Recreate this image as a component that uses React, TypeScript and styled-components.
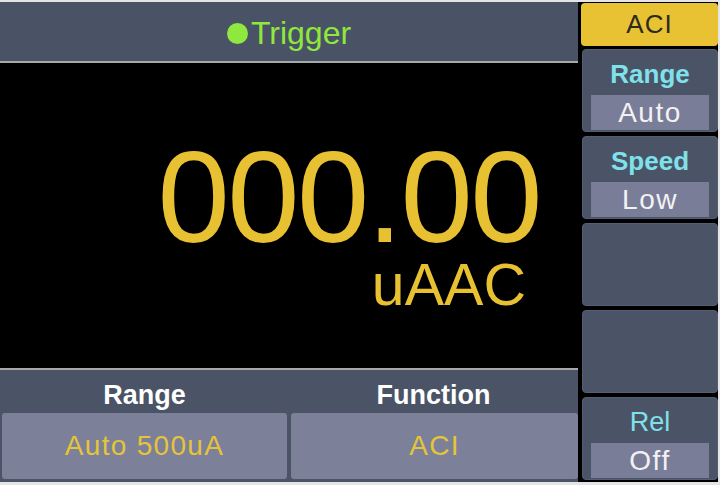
import React from "react";
import styled, { createGlobalStyle } from "styled-components";

const GlobalStyle = createGlobalStyle`
  html, body {
    margin: 0;
    padding: 0;
    background: #e4e5e8;
  }
  body {
    font-family: "Liberation Sans", Arial, sans-serif;
  }
`;

interface SidePanel {
  label?: string;
  value?: string;
  bold?: boolean;
}

const sidePanels: SidePanel[] = [
  { label: "Range", value: "Auto", bold: true },
  { label: "Speed", value: "Low", bold: true },
  {},
  {},
  { label: "Rel", value: "Off", bold: false },
];

const App: React.FC = () => {
  return (
    <>
      <GlobalStyle />
      <Screen>
        <Frame>
          <MainColumn>
            <TopBar>
              <TriggerDot />
              <TriggerText>Trigger</TriggerText>
            </TopBar>
            <Separator />
            <Display>
              <Reading>000.00</Reading>
              <Unit>uAAC</Unit>
            </Display>
            <Separator />
            <BottomSection>
              <LabelRow>
                <BottomLabel>Range</BottomLabel>
                <BottomLabel>Function</BottomLabel>
              </LabelRow>
              <ButtonRow>
                <BottomButton>Auto 500uA</BottomButton>
                <BottomButton>ACI</BottomButton>
              </ButtonRow>
            </BottomSection>
          </MainColumn>
          <SideColumn>
            <ModeButton>ACI</ModeButton>
            {sidePanels.map((p, i) => (
              <Panel key={i}>
                {p.label && <PanelLabel $bold={p.bold}>{p.label}</PanelLabel>}
                {p.value && <PanelValue>{p.value}</PanelValue>}
              </Panel>
            ))}
          </SideColumn>
        </Frame>
      </Screen>
    </>
  );
};

export default App;

const Screen = styled.div`
  width: 720px;
  height: 485px;
  padding-top: 2px;
  box-sizing: border-box;
  overflow: hidden;
`;

const Frame = styled.div`
  width: 718px;
  height: 480px;
  background: #000;
  display: grid;
  grid-template-columns: 578px 1fr;
  column-gap: 3px;
`;

const MainColumn = styled.div`
  display: grid;
  grid-template-rows: 59px 2px 1fr 2px 112px;
`;

const TopBar = styled.div`
  background: #4a5265;
  display: flex;
  align-items: center;
  justify-content: center;
  padding-top: 3px;
  box-sizing: border-box;
`;

const TriggerDot = styled.span`
  width: 21px;
  height: 21px;
  border-radius: 50%;
  background: #8fe83d;
  margin-right: 3px;
`;

const TriggerText = styled.span`
  color: #8fe83d;
  font-size: 32px;
  line-height: 1;
`;

const Separator = styled.div`
  background: #a6a9aa;
`;

const Display = styled.div`
  background: #000;
  display: flex;
  flex-direction: column;
  align-items: flex-end;
  padding: 79px 38px 0 0;
`;

const Reading = styled.div`
  color: #e8c132;
  font-size: 130px;
  line-height: 110px;
  letter-spacing: -2.5px;
`;

const Unit = styled.div`
  color: #e8c132;
  font-size: 59px;
  line-height: 52px;
  margin-top: 7px;
  margin-right: 14px;
`;

const BottomSection = styled.div`
  background: #4a5466;
  display: flex;
  flex-direction: column;
`;

const LabelRow = styled.div`
  display: grid;
  grid-template-columns: 289px 1fr;
  height: 43px;
  box-sizing: border-box;
  padding-top: 12px;
`;

const BottomLabel = styled.div`
  color: #ffffff;
  font-weight: bold;
  font-size: 27px;
  line-height: 26px;
  text-align: center;
`;

const ButtonRow = styled.div`
  display: grid;
  grid-template-columns: 285px 1fr;
  column-gap: 4px;
  padding-left: 2px;
  height: 66px;
`;

const BottomButton = styled.div`
  background: #7c8099;
  border-radius: 3px;
  color: #e4c53a;
  font-size: 28px;
  letter-spacing: 1.3px;
  display: flex;
  align-items: center;
  justify-content: center;
`;

const SideColumn = styled.div`
  display: grid;
  grid-template-rows: 42px repeat(5, 83px);
  row-gap: 4px;
  padding-top: 1px;
`;

const ModeButton = styled.div`
  background: #e9c234;
  border-radius: 4px;
  color: #2b2a22;
  font-size: 26px;
  letter-spacing: 1px;
  display: flex;
  align-items: center;
  justify-content: center;
  margin-bottom: -1px;
`;

const Panel = styled.div`
  background: #4b5467;
  border: 1px solid #555e73;
  border-radius: 4px;
  margin-left: 1px;
  display: flex;
  flex-direction: column;
  align-items: center;
  justify-content: flex-end;
  gap: 8px;
  padding-bottom: 1px;
`;

const PanelLabel = styled.div<{ $bold?: boolean }>`
  color: #7fe1e9;
  font-size: ${(p) => (p.$bold ? "26px" : "27px")};
  font-weight: ${(p) => (p.$bold ? "bold" : "normal")};
  line-height: 26px;
`;

const PanelValue = styled.div`
  width: calc(100% - 16px);
  height: 35px;
  background: #7a7d97;
  color: #f2f2f4;
  font-size: 28px;
  letter-spacing: 1.5px;
  line-height: 35px;
  text-align: center;
`;
